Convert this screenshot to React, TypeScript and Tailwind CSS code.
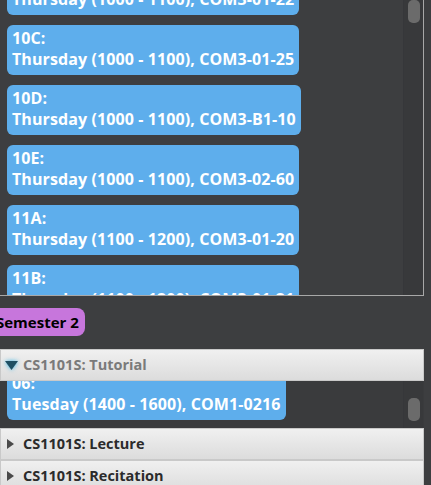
import { ReactNode } from 'react';

const slots = [
  { id: '10B', text: 'Thursday (1000 - 1100), COM3-01-22' },
  { id: '10C', text: 'Thursday (1000 - 1100), COM3-01-25' },
  { id: '10D', text: 'Thursday (1000 - 1100), COM3-B1-10' },
  { id: '10E', text: 'Thursday (1000 - 1100), COM3-02-60' },
  { id: '11A', text: 'Thursday (1100 - 1200), COM3-01-20' },
  { id: '11B', text: 'Thursday (1100 - 1200), COM3-01-21' },
];

function SlotCard({ id, text }: { id: string; text: string }) {
  return (
    <div className="w-fit rounded-[6px] bg-[#5eaeec] pl-[5px] pr-[5px] pt-[3px] pb-[5px] text-[16px] font-bold leading-[21px] tracking-[0.1px] text-white">
      <p>{id}:</p>
      <p className="whitespace-nowrap">{text}</p>
    </div>
  );
}

function Scrollbar({ top, height }: { top: string; height: string }) {
  return (
    <div className="relative w-[20px] shrink-0 border-l border-[#36373a] bg-[#38393b]">
      <div className={`absolute left-[4px] w-[12px] rounded-[5px] bg-[#6b6b6b] ${top} ${height}`} />
    </div>
  );
}

function PaneHeader({ title, open, children }: { title: string; open?: boolean; children?: ReactNode }) {
  return (
    <div className="flex h-[32px] items-center gap-[4px] border border-[#c9c9c9] bg-gradient-to-b from-[#f0f0f0] to-[#dcdcdc] pl-[3px]">
      {open ? (
        <svg width="15" height="12" viewBox="0 0 15 12" className="drop-shadow-[0_0_2px_#39b5e6]">
          <path d="M1 2 L14 2 L7.5 11 Z" fill="#1f4f63" />
        </svg>
      ) : (
        <svg width="15" height="12" viewBox="0 0 15 12">
          <path d="M3 1 L10 6 L3 11 Z" fill="#4a4a4a" />
        </svg>
      )}
      <span className={`text-[14.5px] font-bold ${open ? 'text-[#7a7a7a]' : 'text-[#2b2b2b]'}`}>{title}</span>
      {children}
    </div>
  );
}

export default function App() {
  return (
    <div
      className="h-[485px] w-[431px] overflow-hidden bg-[#3d3e40]"
      style={{ fontFamily: '"Open Sans", "Noto Sans", sans-serif' }}
    >
      <div className="w-[424px]">
        {/* Semester 1 slot list, scrolled */}
        <div className="flex h-[296px] overflow-hidden border-r border-b border-[#a8a8a8]">
          <div className="flex-1 overflow-hidden pl-[7px]">
            <div className="-mt-[35px] flex flex-col gap-[10px]">
              {slots.map((s) => (
                <SlotCard key={s.id} {...s} />
              ))}
            </div>
          </div>
          <Scrollbar top="top-0" height="h-[23px]" />
        </div>

        {/* Semester 2 */}
        <div className="mt-[12px] -ml-[10px] w-fit rounded-[8px] bg-[#c776dc] py-[3px] pl-[6px] pr-[6px] text-[15px] font-bold leading-[22px] text-black">
          Semester 2
        </div>

        <div className="mt-[13px] flex flex-col">
          <PaneHeader title="CS1101S: Tutorial" open />
          <div className="flex h-[47px] overflow-hidden border-x border-[#3a3b3d] bg-[#3a3b3d]">
            <div className="flex flex-1 flex-col justify-end pb-[8px] pl-[6px]">
              <SlotCard id="06" text="Tuesday (1400 - 1600), COM1-0216" />
            </div>
            <Scrollbar top="top-[17px]" height="h-[23px]" />
          </div>
          <PaneHeader title="CS1101S: Lecture" />
          <PaneHeader title="CS1101S: Recitation" />
        </div>
      </div>
    </div>
  );
}
